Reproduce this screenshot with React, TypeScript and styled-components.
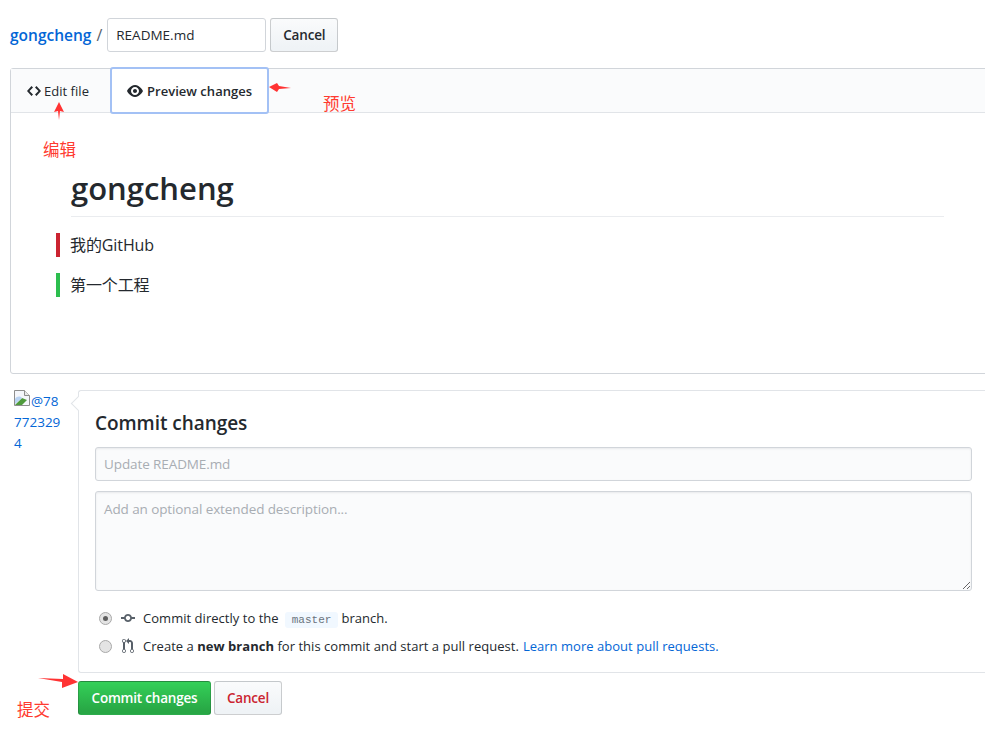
import styled, { createGlobalStyle } from 'styled-components';

const GlobalStyle = createGlobalStyle`
  html, body {
    margin: 0;
    padding: 0;
    background: #fff;
    overflow: hidden;
  }
  * {
    box-sizing: border-box;
  }
`;

const SANS = `'Open Sans', 'Noto Sans CJK SC', sans-serif`;

// Layout
const Page = styled.div`
  position: relative;
  width: 985px;
  height: 729px;
  overflow: hidden;
  padding: 18px 0 0 10px;
  font-family: ${SANS};
  font-size: 14px;
  color: #24292e;
`;

const PathRow = styled.div`
  display: flex;
  align-items: center;
  height: 34px;
  margin-bottom: 16px;
`;

const RepoLink = styled.a`
  color: #0366d6;
  font-size: 15.5px;
  font-weight: 600;
`;

const Separator = styled.span`
  margin: 0 5px;
  font-size: 16px;
  color: #586069;
`;

const NameInput = styled.input`
  width: 159px;
  height: 34px;
  padding: 0 8px;
  border: 1px solid #d1d5da;
  border-radius: 3px;
  font: 13.5px ${SANS};
  color: #24292e;
  outline: none;
`;

const Button = styled.button<{ $danger?: boolean }>`
  height: 34px;
  padding: 0 12px;
  border: 1px solid rgba(27, 31, 35, 0.2);
  border-radius: 3px;
  background: linear-gradient(-180deg, #fafbfc, #eff3f6 90%);
  font: 600 13.5px ${SANS};
  letter-spacing: -0.2px;
  color: ${({ $danger }) => ($danger ? '#cb2431' : '#24292e')};
`;

const CancelTop = styled(Button)`
  width: 68px;
  margin-left: 4px;
  padding: 0;
`;

const Panel = styled.div`
  width: 1010px;
  height: 306px;
  border: 1px solid #d1d5da;
  border-radius: 3px;
`;

const TabBar = styled.div`
  display: flex;
  height: 44px;
  background: #fafbfc;
  border-bottom: 1px solid #e1e4e8;
`;

const Tab = styled.div<{ $active?: boolean }>`
  display: flex;
  align-items: center;
  flex: none;
  white-space: nowrap;
  gap: ${({ $active }) => ($active ? '4px' : '3px')};
  width: ${({ $active }) => ($active ? '159px' : '99px')};
  height: ${({ $active }) => ($active ? '47px' : '44px')};
  margin-top: ${({ $active }) => ($active ? '-2px' : '0')};
  padding: ${({ $active }) => ($active ? '0 0 0 15px' : '0 0 0 16px')};
  font-size: 13px;
  letter-spacing: 0.03px;
  font-weight: ${({ $active }) => ($active ? 600 : 400)};
  background: ${({ $active }) => ($active ? '#fff' : 'transparent')};
  border: ${({ $active }) => ($active ? '2px solid #a3c1f5' : 'none')};
  border-radius: ${({ $active }) => ($active ? '3px' : '0')};
`;

const Preview = styled.div`
  padding: 52px 75px 0 60px;
`;

const Heading = styled.h1`
  margin: 0;
  height: 52px;
  border-bottom: 1px solid #eaecef;
  font-size: 31px;
  line-height: 46px;
  font-weight: 600;
`;

const DiffLine = styled.div<{ $color: string }>`
  display: flex;
  align-items: center;
  height: 24px;
  margin: 16px 0 0 -15px;
  padding: 0 0 2px 10px;
  border-left: 4px solid ${({ $color }) => $color};
  font-size: 16px;
  letter-spacing: -0.1px;
`;

const CommitForm = styled.div`
  display: flex;
  margin-top: 16px;
`;

const AvatarLink = styled.a`
  width: 68px;
  flex: none;
  padding: 0 14px 0 4px;
  font-size: 13.5px;
  line-height: 21px;
  color: #0366d6;
  word-break: break-all;
`;

const BrokenImage = styled.svg`
  display: inline-block;
  width: 16px;
  height: 16px;
  margin-right: 1px;
  vertical-align: 0;
`;

const CommitBox = styled.div`
  position: relative;
  width: 930px;
  height: 283px;
  padding: 19px 0 0 16px;
  border: 1px solid #e1e4e8;
  border-right: none;
  border-radius: 3px 0 0 3px;

  &::before {
    content: '';
    position: absolute;
    left: -6px;
    top: 7px;
    width: 10px;
    height: 10px;
    background: #fff;
    border-left: 1px solid #e1e4e8;
    border-bottom: 1px solid #e1e4e8;
    transform: rotate(45deg);
  }
`;

const CommitTitle = styled.h3`
  margin: 0 0 11px;
  height: 26px;
  font-size: 19px;
  line-height: 26px;
  font-weight: 600;
  letter-spacing: -0.05px;
`;

const fieldStyle = `
  display: block;
  width: 877px;
  padding: 0 8px;
  border: 1px solid #d1d5da;
  border-radius: 3px;
  background: #fafbfc;
  font: 13.5px ${SANS};
  letter-spacing: -0.1px;
  outline: none;
  box-shadow: inset 0 1px 2px rgba(27, 31, 35, 0.075);
  &::placeholder {
    color: #a8adb3;
    opacity: 1;
  }
`;

const SummaryInput = styled.input`
  ${fieldStyle}
  height: 34px;
  margin-bottom: 10px;
`;

const DescriptionInput = styled.textarea`
  ${fieldStyle}
  height: 100px;
  padding-top: 8px;
  margin-bottom: 13px;
  resize: vertical;
`;

const RadioRow = styled.label`
  display: flex;
  align-items: center;
  height: 28px;
  padding-left: 4px;
  font-size: 13px;
  letter-spacing: 0.03px;
`;

const Radio = styled.input`
  appearance: none;
  position: relative;
  width: 13px;
  height: 13px;
  margin: 0 9px 0 0;
  border: 1px solid #a9a9a9;
  border-radius: 50%;
  background: #e4e4e4;

  &:checked::after {
    content: '';
    position: absolute;
    left: 3px;
    top: 3px;
    width: 5px;
    height: 5px;
    border-radius: 50%;
    background: #5f5f5f;
  }
`;

const RowIcon = styled.svg`
  width: 14px;
  height: 16px;
  margin-right: 8px;
  fill: #586069;
`;

const BranchName = styled.code`
  margin: 0 3px 0 6px;
  padding: 2px 7px;
  background: #f1f8ff;
  border-radius: 3px;
  font: 11px/1 'Liberation Mono', monospace;
  color: #6a737d;
`;

const LearnLink = styled.a`
  margin-left: 4px;
  color: #0366d6;
`;

const Actions = styled.div`
  display: flex;
  gap: 3px;
  margin: 8px 0 0 68px;
`;

const CommitButton = styled(Button)`
  width: 133px;
  padding: 0;
  background: linear-gradient(-180deg, #34d058, #28a745 90%);
  color: #fff;
`;

const CancelBottom = styled(Button)`
  width: 68px;
  padding: 0;
`;

// Red marks drawn over the screenshot
const Note = styled.span<{ $x: number; $y: number }>`
  position: absolute;
  left: ${({ $x }) => $x}px;
  top: ${({ $y }) => $y}px;
  font: 16.5px/22px 'Noto Sans CJK SC', sans-serif;
  color: #ff3b30;
`;

const Arrow = styled.svg<{ $x: number; $y: number }>`
  position: absolute;
  left: ${({ $x }) => $x}px;
  top: ${({ $y }) => $y}px;
  fill: #ff3333;
`;

const Octicon = styled.svg`
  flex: none;
  fill: #24292e;
`;

export default function App() {
  return (
    <Page>
      <GlobalStyle />
      <PathRow>
        <RepoLink>gongcheng</RepoLink>
        <Separator>/</Separator>
        <NameInput defaultValue="README.md" />
        <CancelTop>Cancel</CancelTop>
      </PathRow>

      <Panel>
        <TabBar>
          <Tab>
            <Octicon width="14" height="16" viewBox="0 0 14 16">
              <path d="M9.5 3L8 4.5 11.5 8 8 11.5 9.5 13 14 8 9.5 3zm-5 0L0 8l4.5 5L6 11.5 2.5 8 6 4.5 4.5 3z" />
            </Octicon>
            Edit file
          </Tab>
          <Tab $active>
            <Octicon width="16" height="16" viewBox="0 0 16 16">
              <path d="M8.06 2C3 2 0 8 0 8s3 6 8.06 6C13 14 16 8 16 8s-3-6-7.94-6zM8 12c-2.2 0-4-1.78-4-4 0-2.2 1.8-4 4-4 2.22 0 4 1.8 4 4 0 2.22-1.78 4-4 4zm2-4c0 1.11-.89 2-2 2-1.11 0-2-.89-2-2 0-1.11.89-2 2-2 1.11 0 2 .89 2 2z" />
            </Octicon>
            Preview changes
          </Tab>
        </TabBar>
        <Preview>
          <Heading>gongcheng</Heading>
          <DiffLine $color="#cb2431">我的GitHub</DiffLine>
          <DiffLine $color="#2cbe4e">第一个工程</DiffLine>
        </Preview>
      </Panel>

      <CommitForm>
        <AvatarLink>
          <BrokenImage viewBox="0 0 16 16">
            <path d="M.5.5h10l5 5v10H.5z" fill="#f4f6fb" stroke="#8e8e8e" />
            <path d="M10.5.5v5h5" fill="#e8e8e8" stroke="#8e8e8e" />
            <path d="M1 15l7-7 5 2-5 5z" fill="#4f9a3c" />
            <path d="M1 9c2-3 5-3 7-1l-7 6z" fill="#b9d3f3" />
          </BrokenImage>
          @787723294
        </AvatarLink>
        <CommitBox>
          <CommitTitle>Commit changes</CommitTitle>
          <SummaryInput placeholder="Update README.md" />
          <DescriptionInput placeholder="Add an optional extended description..." />
          <RadioRow>
            <Radio type="radio" name="branch" defaultChecked />
            <RowIcon viewBox="0 0 14 16">
              <path d="M10.86 7c-.45-1.72-2-3-3.86-3-1.86 0-3.41 1.28-3.86 3H0v2h3.14c.45 1.72 2 3 3.86 3 1.86 0 3.41-1.28 3.86-3H14V7h-3.14zM7 10.2c-1.22 0-2.2-.98-2.2-2.2 0-1.22.98-2.2 2.2-2.2 1.22 0 2.2.98 2.2 2.2 0 1.22-.98 2.2-2.2 2.2z" />
            </RowIcon>
            <span>
              Commit directly to the<BranchName>master</BranchName>branch.
            </span>
          </RadioRow>
          <RadioRow>
            <Radio type="radio" name="branch" />
            <RowIcon viewBox="0 0 12 16">
              <path d="M11 11.28V5c-.03-.78-.34-1.47-.94-2.06C9.46 2.35 8.78 2.03 8 2H7V0L4 3l3 3V4h1c.27.02.48.11.69.31.21.2.3.42.31.69v6.28A1.993 1.993 0 0 0 10 15a1.993 1.993 0 0 0 1-3.72zm-1 2.92c-.66 0-1.2-.55-1.2-1.2 0-.65.55-1.2 1.2-1.2.65 0 1.2.55 1.2 1.2 0 .65-.55 1.2-1.2 1.2zM4 3c0-1.11-.89-2-2-2a1.993 1.993 0 0 0-1 3.72v6.56A1.993 1.993 0 0 0 2 15a1.993 1.993 0 0 0 1-3.72V4.72c.59-.34 1-.98 1-1.72zm-.8 10c0 .66-.55 1.2-1.2 1.2-.65 0-1.2-.55-1.2-1.2 0-.65.55-1.2 1.2-1.2.65 0 1.2.55 1.2 1.2zM2 4.2C1.34 4.2.8 3.65.8 3c0-.65.55-1.2 1.2-1.2.65 0 1.2.55 1.2 1.2 0 .65-.55 1.2-1.2 1.2z" />
            </RowIcon>
            <span>
              Create a <strong>new branch</strong> for this commit and start a pull request.
              <LearnLink>Learn more about pull requests.</LearnLink>
            </span>
          </RadioRow>
        </CommitBox>
      </CommitForm>

      <Actions>
        <CommitButton>Commit changes</CommitButton>
        <CancelBottom $danger>Cancel</CancelBottom>
      </Actions>

      <Arrow $x={269} $y={81} width="22" height="12" viewBox="0 0 22 12">
        <path d="M0 6L8 2l2 3 12 2-12 1-2 3z" />
      </Arrow>
      <Note $x={323} $y={92}>预览</Note>
      <Arrow $x={53} $y={100} width="12" height="21" viewBox="0 0 12 21">
        <path d="M6 2l5 10-4-1-1 9-1-9-4 1z" />
      </Arrow>
      <Note $x={43} $y={138}>编辑</Note>
      <Arrow $x={37} $y={673} width="42" height="16" viewBox="0 0 42 16">
        <path d="M1 5l25 1V1l15 8-16 6V9z" />
      </Arrow>
      <Note $x={17} $y={698}>提交</Note>
    </Page>
  );
}
